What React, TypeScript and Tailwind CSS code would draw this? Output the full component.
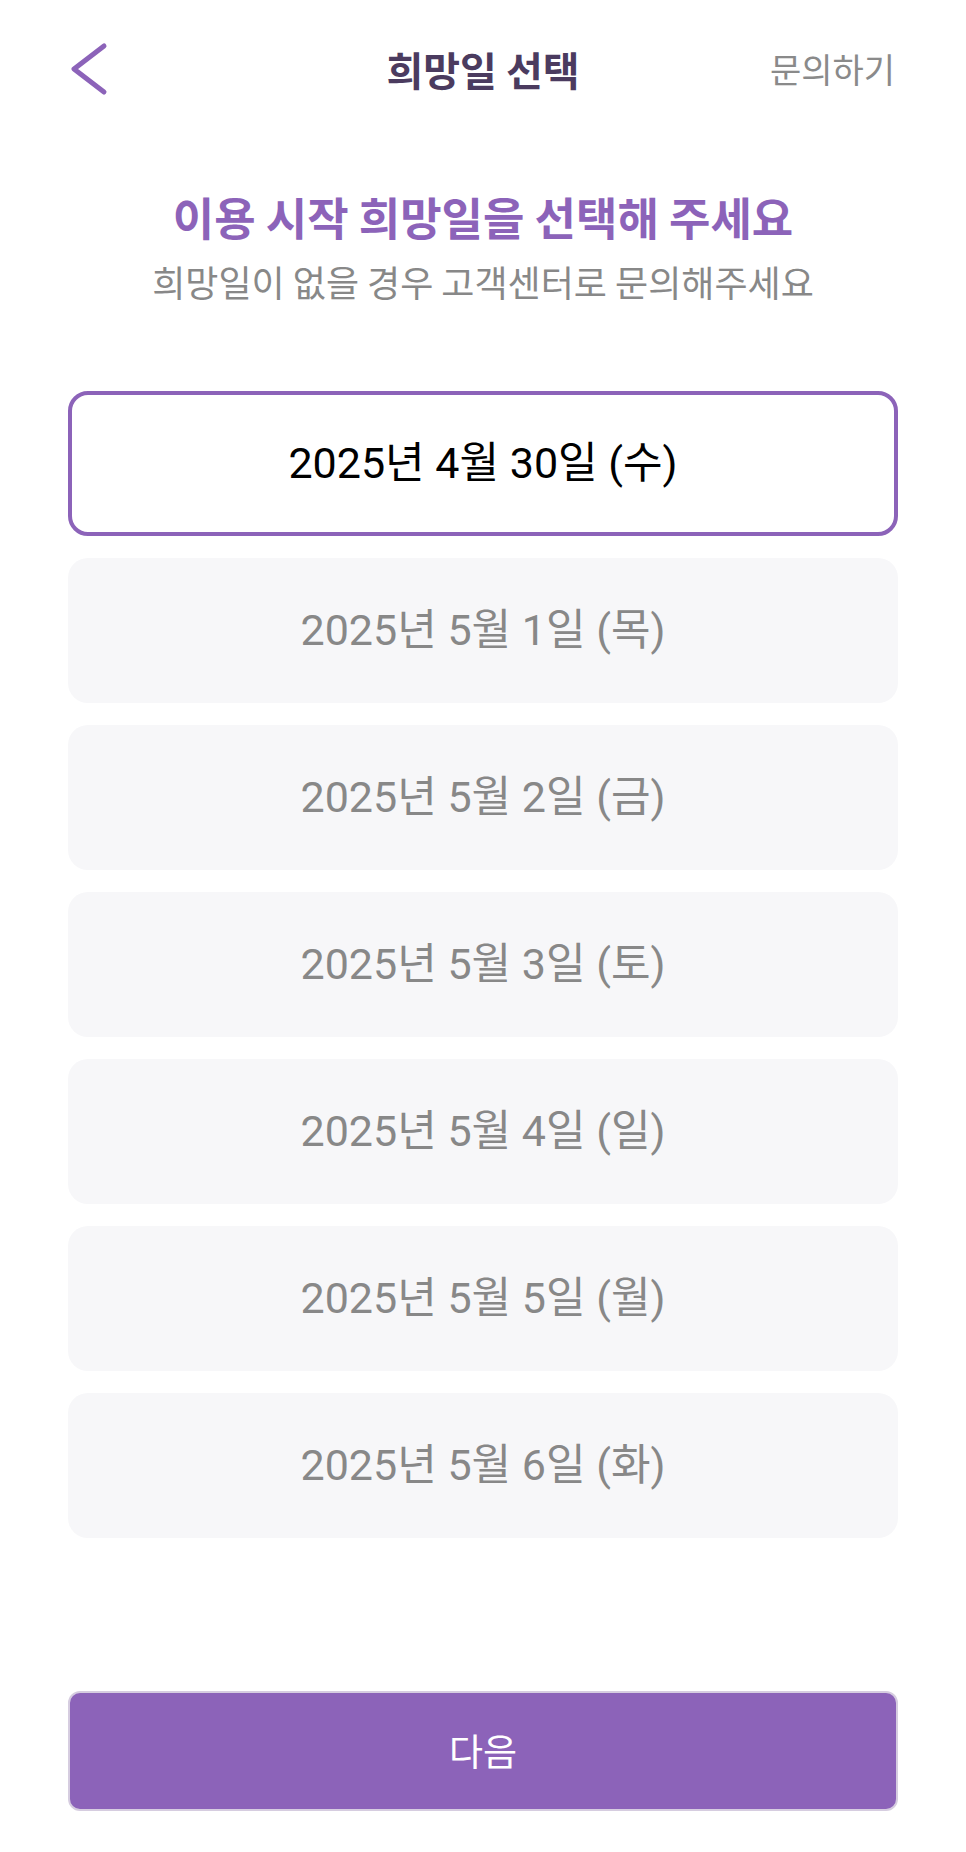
import React from "react";

const dates = [
  "2025년 4월 30일 (수)",
  "2025년 5월 1일 (목)",
  "2025년 5월 2일 (금)",
  "2025년 5월 3일 (토)",
  "2025년 5월 4일 (일)",
  "2025년 5월 5일 (월)",
  "2025년 5월 6일 (화)",
];

export default function App() {
  const [selected, setSelected] = React.useState(0);
  return (
    <div
      className="w-[966px] min-h-[1852px] bg-white flex flex-col"
      style={{ fontFamily: '"Noto Sans CJK KR", "Noto Sans", sans-serif' }}
    >
      {/* Header */}
      <div className="h-[138px] flex items-center justify-between">
        <div className="w-[260px] pl-[70px] flex items-center">
          <svg width="40" height="56" viewBox="0 0 40 56" fill="none">
            <path
              d="M34 5 L4 28 L34 51"
              stroke="#8C63B9"
              strokeWidth="5"
              strokeLinecap="round"
              strokeLinejoin="round"
            />
          </svg>
        </div>
        <div className="text-[40px] font-bold text-[#4b3b5f] leading-none">희망일 선택</div>
        <div className="w-[260px] pr-[71px] text-right text-[34px] text-[#8a8a8a] leading-none">
          문의하기
        </div>
      </div>

      {/* Heading */}
      <div className="mt-[50px] flex flex-col items-center">
        <div className="text-[45px] font-bold text-[#8C63B9] leading-[58px]">
          이용 시작 희망일을 선택해 주세요
        </div>
        <div className="mt-[12px] text-[36px] text-[#888888] leading-[46px]">
          희망일이 없을 경우 고객센터로 문의해주세요
        </div>
      </div>

      {/* Date list */}
      <div className="mt-[87px] px-[68px] flex flex-col gap-[22px]">
        {dates.map((d, i) => (
          <button
            key={d}
            onClick={() => setSelected(i)}
            style={{ fontFamily: 'Roboto, "Noto Sans CJK KR", sans-serif' }}
            className={
              i === selected
                ? "h-[145px] rounded-[20px] border-[4px] border-[#8C63B9] bg-white flex items-center justify-center text-[43px] text-black"
                : "h-[145px] rounded-[20px] bg-[#f7f7f9] flex items-center justify-center text-[43px] text-[#888888]"
            }
          >
            {d}
          </button>
        ))}
      </div>

      {/* Next button */}
      <div className="mt-[153px] px-[68px]">
        <button className="w-full h-[120px] rounded-[12px] bg-[#8C63B9] border-[2px] border-[#d6cde0] text-white text-[37px] flex items-center justify-center">
          다음
        </button>
      </div>
    </div>
  );
}
